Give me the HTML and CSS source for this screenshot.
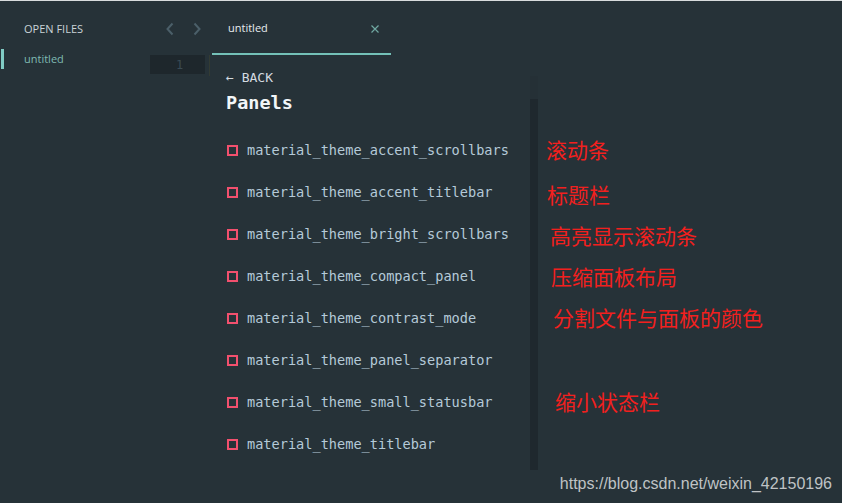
FILE: index.html
```html
<!DOCTYPE html>
<html lang="zh">
<head>
<meta charset="utf-8">
<title>Panels</title>
<link rel="stylesheet" href="styles.css">
</head>
<body>
<div class="app">
  <aside class="sidebar">
    <div class="side-title">OPEN FILES</div>
    <div class="side-file">untitled</div>
  </aside>
  <main class="main">
    <div class="tabbar">
      <div class="nav">
        <svg class="chev" width="10" height="14" viewBox="0 0 10 14"><path d="M7.5 1.5 L2.5 7 L7.5 12.5" fill="none" stroke="#4b5f69" stroke-width="2"/></svg>
        <svg class="chev" width="10" height="14" viewBox="0 0 10 14"><path d="M2.5 1.5 L7.5 7 L2.5 12.5" fill="none" stroke="#4b5f69" stroke-width="2"/></svg>
      </div>
      <div class="tab">
        <span class="tab-name">untitled</span>
        <svg class="close" width="8" height="8" viewBox="0 0 8 8"><path d="M0.5 0.5 L7.5 7.5 M7.5 0.5 L0.5 7.5" stroke="#6fa8a2" stroke-width="1.2"/></svg>
      </div>
    </div>
    <div class="editor">
      <div class="gutter"><span class="ln">1</span></div>
      <div class="gutter-line"></div>
      <div class="sheet">
        <div class="back">← BACK</div>
        <h1 class="title">Panels</h1>
        <ul class="list">
          <li class="row"><span class="box"></span>material_theme_accent_scrollbars</li>
          <li class="row"><span class="box"></span>material_theme_accent_titlebar</li>
          <li class="row"><span class="box"></span>material_theme_bright_scrollbars</li>
          <li class="row"><span class="box"></span>material_theme_compact_panel</li>
          <li class="row"><span class="box"></span>material_theme_contrast_mode</li>
          <li class="row"><span class="box"></span>material_theme_panel_separator</li>
          <li class="row"><span class="box"></span>material_theme_small_statusbar</li>
          <li class="row"><span class="box"></span>material_theme_titlebar</li>
        </ul>
      </div>
      <div class="scrollbar"><div class="thumb"></div></div>
    </div>
  </main>
</div>
<div class="note n1">滚动条</div>
<div class="note n2">标题栏</div>
<div class="note n3">高亮显示滚动条</div>
<div class="note n4">压缩面板布局</div>
<div class="note n5">分割文件与面板的颜色</div>
<div class="note n6">缩小状态栏</div>
<div class="watermark">https://blog.csdn.net/weixin_42150196</div>
</body>
</html>
```
FILE: styles.css
```css
html, body {
  margin: 0;
  padding: 0;
  background: #263238;
  width: 842px;
  height: 503px;
  overflow: hidden;
}
body {
  border-top: 1px solid #d8dcdd;
  box-sizing: border-box;
  position: relative;
  font-family: "Open Sans", "Noto Sans", sans-serif;
}
.app {
  display: flex;
  height: 502px;
}
.sidebar {
  width: 150px;
  flex: none;
}
.side-title {
  margin: 20px 0 0 24px;
  font-size: 11px;
  line-height: 16px;
  color: #c9d3d7;
}
.side-file {
  margin-top: 12px;
  padding-left: 20px;
  border-left: 3px solid #80cbc4;
  margin-left: 1px;
  height: 20px;
  line-height: 20px;
  font-size: 11px;
  color: #7fbab2;
  box-sizing: border-box;
}
.main {
  flex: 1;
  display: flex;
  flex-direction: column;
}
.tabbar {
  display: flex;
  height: 54px;
}
.nav {
  width: 62px;
  display: flex;
  align-items: flex-start;
  gap: 17px;
  padding: 21px 0 0 15px;
  box-sizing: border-box;
}
.tab {
  width: 179px;
  border-bottom: 2px solid #74c1b8;
  box-sizing: border-box;
  display: flex;
  align-items: flex-start;
  justify-content: space-between;
  padding: 19px 12px 0 16px;
}
.tab-name {
  font-size: 11px;
  line-height: 16px;
  color: #e6ecee;
}
.close {
  margin-top: 5px;
}
.editor {
  display: flex;
  align-items: flex-start;
}
.gutter {
  width: 55px;
  height: 19px;
  background: #1e272c;
  display: flex;
  justify-content: center;
  align-items: center;
  font-family: "DejaVu Sans Mono", monospace;
  font-size: 12px;
  color: #3a4b54;
  padding-left: 4px;
  box-sizing: border-box;
}
.gutter-line {
  width: 1px;
  height: 21px;
  background: #333b33;
  margin-left: 4px;
}
.sheet {
  width: 320px;
  padding-left: 16px;
  box-sizing: border-box;
  font-family: "DejaVu Sans Mono", monospace;
}
.back {
  margin-top: 15px;
  font-size: 13px;
  line-height: 16px;
  color: #d4dbe0;
}
.title {
  margin: 5px 0 0;
  font-size: 18.5px;
  line-height: 24px;
  font-weight: bold;
  color: #f2f6f8;
}
.list {
  list-style: none;
  margin: 14px 0 0;
  padding: 0;
}
.row {
  height: 42px;
  display: flex;
  align-items: center;
  font-size: 13.6px;
  color: #b5cad8;
  white-space: nowrap;
}
.box {
  width: 11px;
  height: 11px;
  border: 2px solid #f2506e;
  box-sizing: border-box;
  margin: 0 9px 0 1px;
  flex: none;
}
.scrollbar {
  margin-top: 21px;
  width: 8px;
  height: 394px;
  background: #1f282e;
}
.thumb {
  height: 23px;
  background: #253036;
}
.note {
  position: absolute;
  font-family: "Noto Sans CJK SC", "Noto Sans", sans-serif;
  font-size: 21px;
  line-height: 24px;
  color: #f2201e;
  white-space: nowrap;
}
.n1 { left: 546px; top: 136px; }
.n2 { left: 547px; top: 181px; }
.n3 { left: 550px; top: 222px; }
.n4 { left: 551px; top: 263px; }
.n5 { left: 553px; top: 304px; }
.n6 { left: 555px; top: 388px; }
.watermark {
  position: absolute;
  right: 10px;
  top: 474px;
  font-family: "Liberation Sans", Arial, sans-serif;
  font-size: 16px;
  line-height: 18px;
  color: #bfc3c5;
  white-space: nowrap;
}
```
